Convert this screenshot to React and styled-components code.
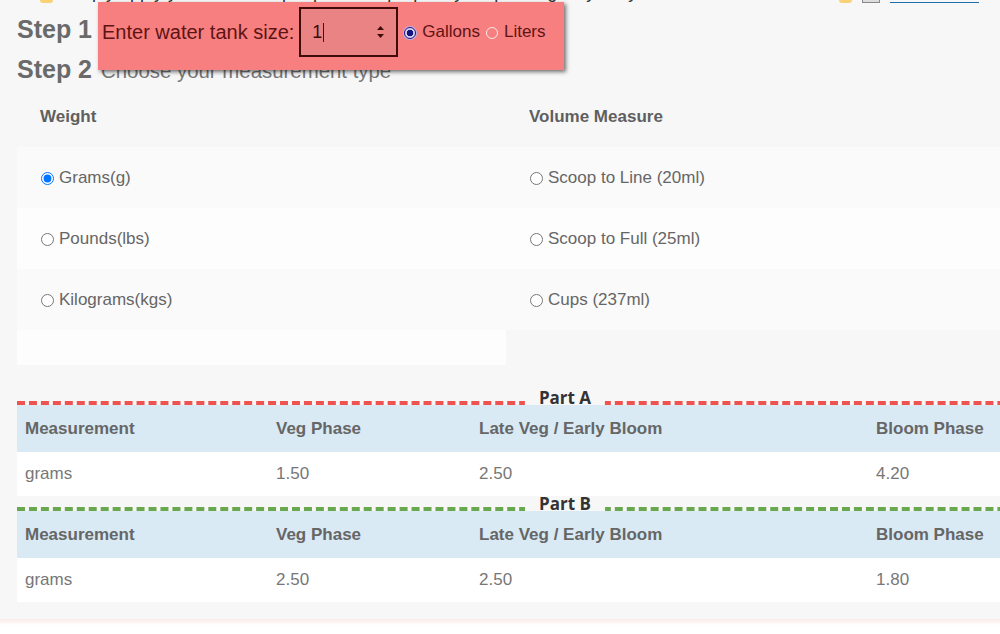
import React from 'react';
import styled, { createGlobalStyle } from 'styled-components';

const GlobalStyle = createGlobalStyle`
  html, body {
    margin: 0;
    padding: 0;
  }
  body {
    background: #f7f7f7;
    font-family: "Liberation Sans", Arial, sans-serif;
    color: #666;
    overflow: hidden;
  }
`;

const Page = styled.div`
  position: relative;
  width: 1096px;
  padding-left: 17px;
  height: 634px;
`;

/* the line above is scrolled off, only its bottom pixels show */
const TopStrip = styled.div`
  display: flex;
  align-items: flex-end;
  height: 3px;
  width: 962px;
  overflow: hidden;
  font-size: 18px;
  line-height: 22px;
  color: #333;
`;

const Emoji = styled.span`
  flex: none;
  width: 13px;
  height: 14px;
  margin: 0 8px 0 23px;
  border-radius: 3px;
  background: #f8d274;
`;

const RightBits = styled.div`
  display: flex;
  align-items: flex-end;
  margin-left: auto;
  gap: 10px;
`;

const GrayBox = styled.span`
  width: 16px;
  height: 14px;
  border: 1px solid #888;
  background: #ddd;
`;

const TopLink = styled.a`
  width: 89px;
  height: 14px;
  border-bottom: 1px solid #1f6fa8;
`;

const StepLine = styled.div`
  display: flex;
  align-items: baseline;
  height: 28px;
  margin-top: 12px;
`;

const StepLabel = styled.span`
  font-size: 25px;
  font-weight: bold;
  color: #6a6a6a;
  margin-right: 9px;
`;

const StepText = styled.span`
  font-size: 20.4px;
  color: #777;
`;

const Popup = styled.div`
  position: absolute;
  left: 98px;
  top: 2px;
  width: 466px;
  height: 68px;
  box-sizing: border-box;
  padding: 0 0 8px 4px;
  display: flex;
  align-items: center;
  background: #f77f7f;
  box-shadow: 2px 2px 4px rgba(0, 0, 0, 0.55);
  color: #5e1414;
  font-size: 17px;
`;

const PopupLabel = styled.span`
  font-size: 20px;
  margin-right: 5px;
`;

const NumberBox = styled.div`
  display: flex;
  align-items: center;
  width: 99px;
  height: 50px;
  box-sizing: border-box;
  padding: 0 11px;
  border: 2px solid #3f0b0b;
  background: #ea8383;
  font-size: 18px;
  color: #3f0b0b;
`;

const Caret = styled.span`
  width: 1px;
  height: 19px;
  margin-left: 1px;
  background: #222;
`;

const Spinner = styled.svg`
  margin-left: auto;
`;

const PopupRadio = styled.input`
  appearance: none;
  flex: none;
  width: 12px;
  height: 12px;
  box-sizing: border-box;
  margin: 1px 6px 0 6px;
  border-radius: 50%;
  border: 1px solid ${p => (p.defaultChecked ? '#1c1c8c' : '#fbeaea')};
  background: ${p =>
    p.defaultChecked
      ? 'radial-gradient(circle, #15157e 0 3px, #d9d3f4 3.6px)'
      : 'transparent'};
  box-shadow: ${p => (p.defaultChecked ? '0 0 0 1px #b9b4ee' : 'none')};
`;

const MeasureGrid = styled.div`
  display: grid;
  grid-template-columns: 489px 1fr;
  margin-top: 14px;
`;

const Column = styled.div`
  display: flex;
  flex-direction: column;
`;

const ColumnHead = styled.div`
  height: 50px;
  box-sizing: border-box;
  padding: 11px 23px 0;
  font-size: 17px;
  line-height: 18px;
  font-weight: bold;
  color: #5f5f5f;
`;

const OptionRow = styled.label`
  display: flex;
  align-items: center;
  height: ${p => (p.$short ? '35px' : '61px')};
  padding: 1px 0 0 19px;
  box-sizing: border-box;
  background: ${p => (p.$alt ? '#fdfdfd' : '#fafafa')};
  font-size: 17px;
  color: #666;
  input {
    margin: 0 5px 0 5px;
  }
`;

const Part = styled.div`
  position: relative;
  margin-top: ${p => p.$gap};
  border-top: 4px dashed ${p => p.$color};
`;

const PartLabel = styled.span`
  position: absolute;
  left: 50%;
  top: -14px;
  transform: translateX(-50%);
  padding: 0 14px;
  background: #f7f7f7;
  font-family: "Open Sans", "Liberation Sans", sans-serif;
  font-size: 17px;
  font-weight: bold;
  line-height: 14px;
  color: #333;
`;

const Table = styled.table`
  width: 100%;
  border-collapse: collapse;
  table-layout: fixed;
  font-size: 17px;
`;

const Th = styled.th`
  height: 47px;
  padding: 0 8px;
  text-align: left;
  background: #d9eaf5;
  color: #666;
  font-weight: bold;
`;

const Td = styled.td`
  height: 44px;
  padding: 0 8px;
  background: #fff;
  color: #777;
`;

const Footer = styled.div`
  margin: 17px 0 0 -17px;
  width: 1113px;
  height: 20px;
  background: linear-gradient(#fbe9e9, #fff 6px);
`;

const weights = ['Grams(g)', 'Pounds(lbs)', 'Kilograms(kgs)'];
const volumes = ['Scoop to Line (20ml)', 'Scoop to Full (25ml)', 'Cups (237ml)'];

const parts = [
  { name: 'Part A', color: '#ef5350', gap: '36px', values: ['1.50', '2.50', '4.20'] },
  { name: 'Part B', color: '#6aa84f', gap: '11px', values: ['2.50', '2.50', '1.80'] },
];

function PartTable({ part }) {
  return (
    <Part $color={part.color} $gap={part.gap}>
      <PartLabel>{part.name}</PartLabel>
      <Table>
        <colgroup>
          <col style={{ width: 251 }} />
          <col style={{ width: 203 }} />
          <col style={{ width: 397 }} />
          <col />
        </colgroup>
        <thead>
          <tr>
            <Th>Measurement</Th>
            <Th>Veg Phase</Th>
            <Th>Late Veg / Early Bloom</Th>
            <Th>Bloom Phase</Th>
          </tr>
        </thead>
        <tbody>
          <tr>
            <Td>grams</Td>
            {part.values.map((v, i) => (
              <Td key={i}>{v}</Td>
            ))}
          </tr>
        </tbody>
      </Table>
    </Part>
  );
}

export default function App() {
  return (
    <>
      <GlobalStyle />
      <Page>
        <TopStrip>
          <Emoji />
          <span>Simply apply your nutrients per phase to prepare your plants gently daily</span>
          <RightBits>
            <Emoji style={{ margin: 0 }} />
            <GrayBox />
            <TopLink />
          </RightBits>
        </TopStrip>

        <StepLine>
          <StepLabel>Step 1</StepLabel>
        </StepLine>
        <StepLine>
          <StepLabel>Step 2</StepLabel>
          <StepText>Choose your measurement type</StepText>
        </StepLine>

        <MeasureGrid>
          <Column>
            <ColumnHead>Weight</ColumnHead>
            {weights.map((w, i) => (
              <OptionRow key={w} $alt={i % 2 === 1}>
                <input type="radio" name="measure" defaultChecked={i === 0} />
                {w}
              </OptionRow>
            ))}
            <OptionRow $short $alt />
          </Column>
          <Column>
            <ColumnHead>Volume Measure</ColumnHead>
            {volumes.map((v, i) => (
              <OptionRow key={v} $alt={i % 2 === 1}>
                <input type="radio" name="measure" />
                {v}
              </OptionRow>
            ))}
          </Column>
        </MeasureGrid>

        {parts.map(p => (
          <PartTable key={p.name} part={p} />
        ))}

        <Footer />

        <Popup>
          <PopupLabel>Enter water tank size:</PopupLabel>
          <NumberBox>
            1<Caret />
            <Spinner width="9" height="16" viewBox="0 0 9 16">
              <path d="M4.5 2 L8 6 H1 Z" fill="#3f0b0b" />
              <path d="M4.5 14 L8 10 H1 Z" fill="#3f0b0b" />
            </Spinner>
          </NumberBox>
          <PopupRadio type="radio" name="unit" defaultChecked />
          Gallons
          <PopupRadio type="radio" name="unit" />
          Liters
        </Popup>
      </Page>
    </>
  );
}
